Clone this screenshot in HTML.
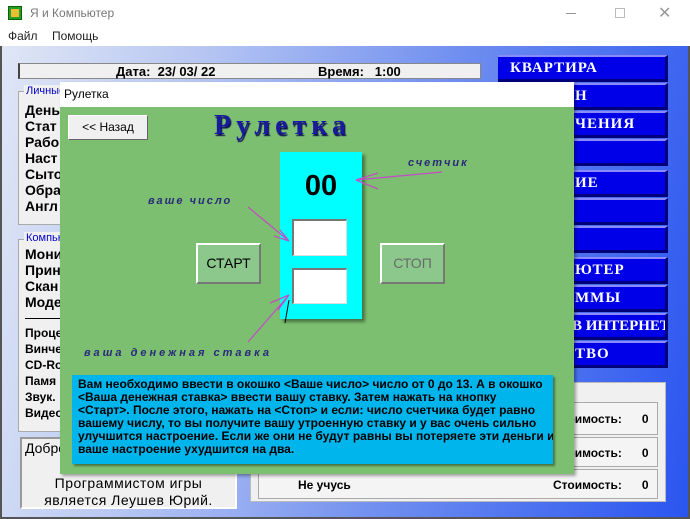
<!DOCTYPE html>
<html><head><meta charset="utf-8"><style>
*{margin:0;padding:0;box-sizing:border-box}
body{width:690px;height:519px;overflow:hidden;position:relative;font-family:"Liberation Sans",sans-serif;background:#fff}
.a{position:absolute}
.win{left:0;top:46px;width:690px;height:473px;background:linear-gradient(100deg,#dfe6f5 0%,#b9c8f2 25%,#6f8ef0 60%,#2a55f0 100%);border-left:2px solid #555;border-right:2px solid #555;border-bottom:2px solid #555}
.grp{background:#f0f0f0;border:1px solid #aaa}
.b{font-weight:bold;font-size:14px;color:#000}
.rb{left:498px;width:170px;height:27px;background:#0000e8;border-top:2px solid #8a8af8;border-bottom:3px solid #00007a;border-right:3px solid #00007a;color:#fff;font-family:"Liberation Serif",serif;font-weight:bold;font-size:15px;letter-spacing:1px;padding:3px 0 0 77px;white-space:nowrap;overflow:hidden}
.lab{font-family:"Liberation Sans",sans-serif;font-style:italic;font-weight:bold;color:#2a2a7a;font-size:11px;letter-spacing:2px}
.box{background:#fff;border-top:2px solid #777;border-left:2px solid #777;border-bottom:1px solid #ddd;border-right:1px solid #ddd}
.btn{background:#8cc88c;border:2px solid #fff;border-right-color:#777;border-bottom-color:#777;font-size:15px;text-align:center;line-height:36px}
</style></head><body>
<div class="a" style="left:8px;top:6px;width:14px;height:14px;background:#2a9a2a;border:1px solid #060"><div style="margin:2px;width:8px;height:8px;background:#e8c030"></div></div>
<div class="a" style="left:30px;top:6px;font-size:12px;color:#777">Я и Компьютер</div>
<div class="a" style="left:566px;top:13px;width:10px;height:1px;background:#999"></div>
<div class="a" style="left:615px;top:8px;width:10px;height:10px;border:1px solid #bbb"></div>
<div class="a" style="left:658px;top:3px;font-size:16px;color:#999">✕</div>
<div class="a" style="left:8px;top:29px;font-size:12px;color:#222">Файл</div>
<div class="a" style="left:52px;top:29px;font-size:12px;color:#222">Помощь</div>
<div class="a win"></div>
<div class="a" style="left:18px;top:63px;width:463px;height:16px;background:#f0f0f0;border:1px solid #888;border-left:2px solid #444"></div>
<div class="a b" style="left:116px;top:64px;font-size:13px">Дата:&nbsp; 23/ 03/ 22</div>
<div class="a b" style="left:318px;top:64px;font-size:13px">Время:&nbsp;&nbsp; 1:00</div>
<div class="a grp" style="left:18px;top:91px;width:80px;height:134px"></div>
<div class="a" style="left:24px;top:85px;font-size:11px;color:#00c;background:#f0f0f0;padding:0 2px">Личные данные</div>
<div class="a b" style="left:25px;top:102px;line-height:16px">День<br>Стат<br>Рабо<br>Наст<br>Сыто<br>Обра<br>Англ</div>
<div class="a grp" style="left:18px;top:239px;width:80px;height:193px"></div>
<div class="a" style="left:24px;top:232px;font-size:11px;color:#00c;background:#f0f0f0;padding:0 2px">Компьютер</div>
<div class="a b" style="left:25px;top:246px;line-height:16px">Мони<br>Прин<br>Скан<br>Моде</div>
<div class="a" style="left:25px;top:318px;width:40px;height:1px;background:#000"></div>
<div class="a b" style="left:25px;top:325px;font-size:12px;line-height:16px">Проце<br>Винче<br>CD-Ro<br>Памя<br>Звук.<br>Видео</div>
<div class="a" style="left:20px;top:437px;width:217px;height:72px;background:#f0f0f0;border:2px solid #999;border-right-color:#fff;border-bottom-color:#fff"></div>
<div class="a" style="left:25px;top:440px;font-size:14px">Добро пожаловать</div>
<div class="a" style="left:20px;top:475px;width:217px;text-align:center;font-size:14px;line-height:17px;letter-spacing:0.5px">Программистом игры<br>является Леушев Юрий.</div>
<div class="a rb" style="top:55px;padding-left:12px">КВАРТИРА</div>
<div class="a rb" style="top:83px">Н</div>
<div class="a rb" style="top:111px">ЧЕНИЯ</div>
<div class="a rb" style="top:139px"></div>
<div class="a rb" style="top:170px">ИЕ</div>
<div class="a rb" style="top:198px"></div>
<div class="a rb" style="top:226px"></div>
<div class="a rb" style="top:257px">ЮТЕР</div>
<div class="a rb" style="top:285px">ММЫ</div>
<div class="a rb" style="top:313px;padding-left:74px;letter-spacing:0">В ИНТЕРНЕТ</div>
<div class="a rb" style="top:341px">ТВО</div>
<div class="a" style="left:250px;top:382px;width:416px;height:120px;background:#f0f0f0;border:1px solid #bbb"></div>
<div class="a" style="left:258px;top:402px;width:400px;height:33px;border:1px solid #aaa;background:#f4f4f4"></div>
<div class="a" style="left:258px;top:437px;width:400px;height:30px;border:1px solid #aaa;background:#f4f4f4"></div>
<div class="a" style="left:258px;top:469px;width:400px;height:30px;border:1px solid #aaa;background:#f4f4f4"></div>
<div class="a b" style="left:553px;top:412px;font-size:12px">Стоимость:&nbsp;&nbsp;&nbsp;&nbsp;&nbsp; 0</div>
<div class="a b" style="left:553px;top:446px;font-size:12px">Стоимость:&nbsp;&nbsp;&nbsp;&nbsp;&nbsp; 0</div>
<div class="a b" style="left:553px;top:478px;font-size:12px">Стоимость:&nbsp;&nbsp;&nbsp;&nbsp;&nbsp; 0</div>
<div class="a b" style="left:298px;top:478px;font-size:12px">Не учусь</div>
<div class="a" style="left:60px;top:82px;width:514px;height:392px;background:#7cbf70;box-shadow:2px 2px 3px rgba(0,0,0,.35)"></div>
<div class="a" style="left:60px;top:82px;width:514px;height:25px;background:#fff"></div>
<div class="a" style="left:64px;top:87px;font-size:12px;color:#000">Рулетка</div>
<div class="a" style="left:68px;top:115px;width:80px;height:25px;background:#f0f0f0;border:1px solid #fff;border-right-color:#666;border-bottom-color:#666;font-size:12px;text-align:center;line-height:23px">&lt;&lt; Назад</div>
<div class="a" style="left:214px;top:110px;font-family:'Liberation Serif',serif;font-weight:bold;font-size:28px;color:#1a1a9e;letter-spacing:5px;text-shadow:1px 2px 1px #0a1050">Рулетка</div>
<div class="a" style="left:280px;top:152px;width:82px;height:167px;background:#00ffff;box-shadow:3px 3px 3px rgba(0,0,0,.4)"></div>
<div class="a" style="left:280px;top:170px;width:82px;text-align:center;font-size:29px;font-weight:bold">00</div>
<div class="a box" style="left:292px;top:219px;width:55px;height:37px"></div>
<div class="a box" style="left:292px;top:268px;width:55px;height:36px"></div>
<div class="a btn" style="left:196px;top:243px;width:65px;height:41px;font-size:14px">СТАРТ</div>
<div class="a btn" style="left:380px;top:243px;width:65px;height:41px;font-size:14px;color:#6a6a6a">СТОП</div>
<div class="a lab" style="left:148px;top:195px">ваше число</div>
<div class="a lab" style="left:408px;top:157px">счетчик</div>
<div class="a lab" style="left:84px;top:347px;letter-spacing:3px">ваша денежная ставка</div>
<svg class="a" style="left:0;top:0" width="690" height="519">
<g stroke="#c050c0" stroke-width="1.3" fill="none">
<path d="M248 207 L289 241 M289 241 L280 230 M289 241 L274 236"/>
<path d="M442 172 L356 180 M356 180 L378 173 M356 180 L378 189"/>
<path d="M248 342 L289 295 M289 295 L270 303 M289 295 L278 310"/>
</g>
<path d="M289 300 L285 323" stroke="#000" stroke-width="1"/>
</svg>
<div class="a" style="left:72px;top:375px;width:481px;height:89px;background:#00b4ec;box-shadow:2px 2px 2px rgba(0,0,0,.4);padding:3px 6px;font-size:12px;font-weight:bold;line-height:13px;overflow:hidden;white-space:nowrap">Вам необходимо ввести в окошко &lt;Ваше число&gt; число от 0 до 13. А в окошко<br>&lt;Ваша денежная ставка&gt; ввести вашу ставку. Затем нажать на кнопку<br>&lt;Старт&gt;. После этого, нажать на &lt;Стоп&gt; и если: число счетчика будет равно<br>вашему числу, то вы получите вашу утроенную ставку и у вас очень сильно<br>улучшится настроение. Если же они не будут равны вы потеряете эти деньги и<br>ваше настроение ухудшится на два.</div>
</body></html>
